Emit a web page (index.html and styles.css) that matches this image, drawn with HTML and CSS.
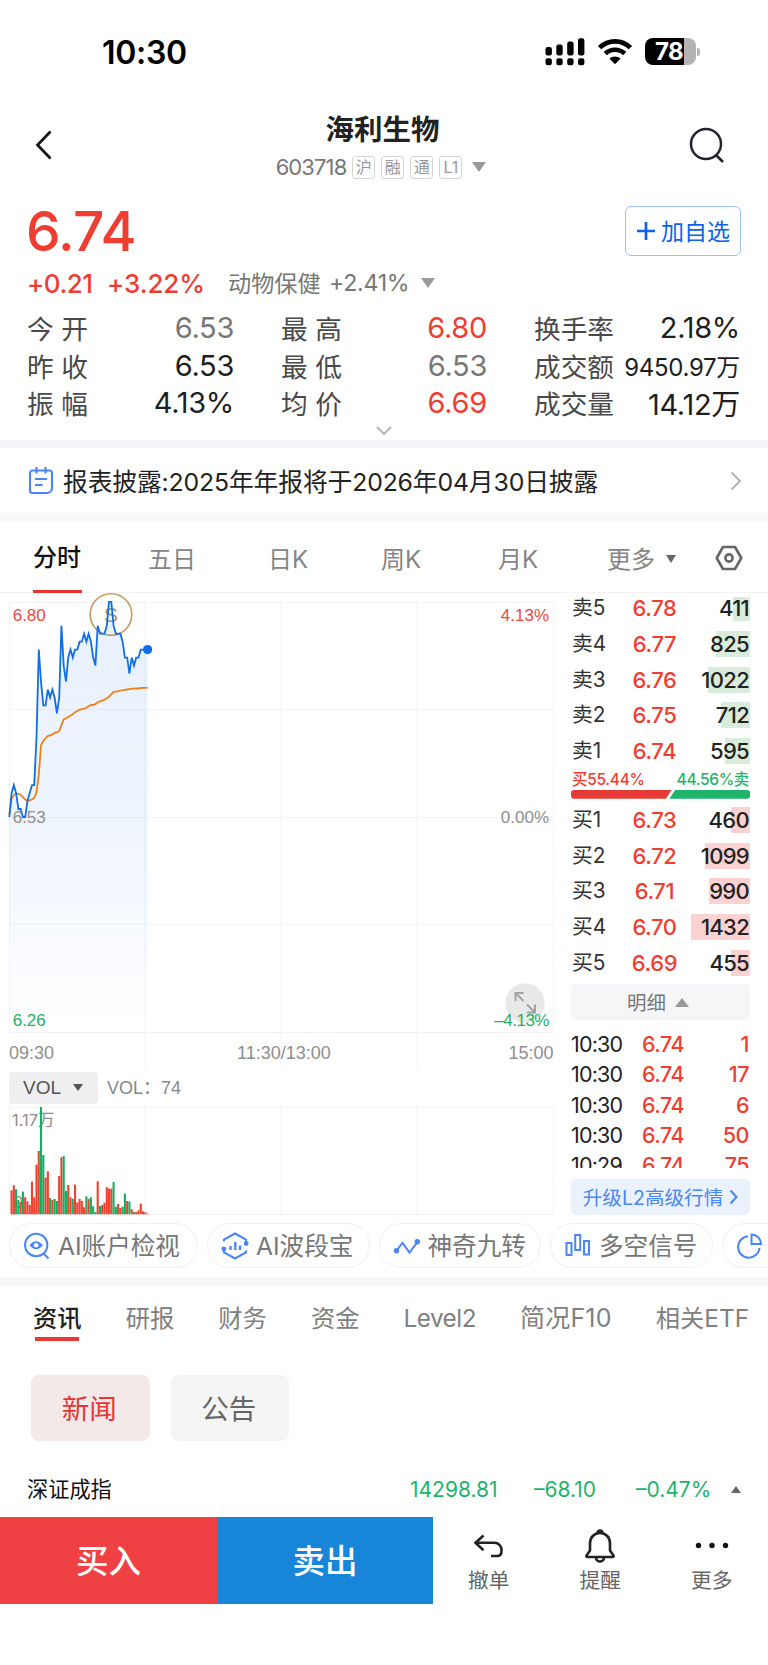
FILE: index.html
```html
<!DOCTYPE html>
<html lang="zh-CN">
<head>
  <meta charset="UTF-8">
  <meta name="viewport" content="width=device-width, initial-scale=1.0">
  <title>海利生物 603718</title>
  <link rel="stylesheet" href="styles.css">
</head>
<body>

  <!-- 状态栏 -->
  <div class="status-bar">
    <span class="clock">10:30</span>
    <div class="status-icons">
      <svg width="40" height="28" viewBox="0 0 40 28">
        <rect x="0.5" y="9" width="6.4" height="8.5" rx="2.2"/>
        <rect x="11.3" y="6.5" width="6.4" height="11" rx="2.2"/>
        <rect x="22.2" y="3.5" width="6.4" height="14" rx="2.2"/>
        <rect x="33" y="0.3" width="6.4" height="17.2" rx="2.2"/>
        <rect x="0.5" y="20.3" width="6.4" height="7" rx="2.2"/>
        <rect x="11.3" y="20.3" width="6.4" height="7" rx="2.2"/>
        <rect x="22.2" y="20.3" width="6.4" height="7" rx="2.2"/>
        <rect x="33" y="20.3" width="6.4" height="7" rx="2.2"/>
      </svg>
      <svg class="wifi" width="36" height="28" viewBox="0 0 36 28">
        <path d="M2.6 9.6a22 22 0 0 1 30.8 0" fill="none" stroke="#000" stroke-width="4.8"/>
        <path d="M8.3 15.7a13.8 13.8 0 0 1 19.4 0" fill="none" stroke="#000" stroke-width="4.6"/>
        <path d="M18 26.3l-5.6-5.7a8.2 8.2 0 0 1 11.2 0z"/>
      </svg>
      <div class="battery">78</div>
      <span class="battery-tip"></span>
    </div>
  </div>

  <!-- 标题 -->
  <header class="header">
    <svg class="back" width="20" height="32" viewBox="0 0 20 32"><path d="M16.5 2.5L3.5 16l13 13.5" fill="none" stroke="#111" stroke-width="2.7"/></svg>
    <div class="title-box">
      <h1>海利生物</h1>
      <div class="code-line">
        <span class="code">603718</span>
        <span class="tag">沪</span>
        <span class="tag">融</span>
        <span class="tag">通</span>
        <span class="tag">L1</span>
        <i class="tri-down"></i>
      </div>
    </div>
    <svg class="search" width="38" height="38" viewBox="0 0 38 38"><circle cx="18" cy="18" r="15" fill="none" stroke="#23232b" stroke-width="2.5"/><path d="M28 29l7 7" stroke="#23232b" stroke-width="2.7"/></svg>
  </header>

  <!-- 报价 -->
  <section class="quote">
    <div class="quote-top">
      <span class="price">6.74</span>
      <button class="add-button">
        <svg width="20" height="20" viewBox="0 0 20 20"><path d="M10 1v18M1 10h18" stroke="#0a63f0" stroke-width="2.7"/></svg><span>加自选</span>
      </button>
    </div>
    <div class="change-line">
      <span class="change">+0.21</span>
      <span class="change percent">+3.22%</span>
      <span class="sector">动物保健</span>
      <span class="sector-change">+2.41%</span>
      <i class="tri-down"></i>
    </div>
    <div class="stats">
      <div class="stat"><span>今 开</span><b class="gray">6.53</b></div>
      <div class="stat"><span>最 高</span><b class="red">6.80</b></div>
      <div class="stat"><span>换手率</span><b>2.18%</b></div>
      <div class="stat"><span>昨 收</span><b>6.53</b></div>
      <div class="stat"><span>最 低</span><b class="gray">6.53</b></div>
      <div class="stat"><span>成交额</span><b class="small">9450.97万</b></div>
      <div class="stat"><span>振 幅</span><b>4.13%</b></div>
      <div class="stat"><span>均 价</span><b class="red">6.69</b></div>
      <div class="stat"><span>成交量</span><b>14.12万</b></div>
    </div>
    <svg class="expand-stats" width="18" height="12" viewBox="0 0 18 12"><path d="M2 2l7 7 7-7" fill="none" stroke="#b5b5b5" stroke-width="2"/></svg>
  </section>

  <!-- 公告提示 -->
  <section class="notice">
    <svg width="26" height="30" viewBox="0 0 26 30" fill="none" stroke="#4a86f7" stroke-width="2.2">
      <path d="M4.5 4.5h17a2.5 2.5 0 0 1 2.5 2.5v15a5 5 0 0 1-5 5H4.5a2.5 2.5 0 0 1-2.5-2.5V7a2.5 2.5 0 0 1 2.5-2.5z"/>
      <path d="M8.5 1v6.5M17.5 1v6.5M7 13h12M7 19h7.5"/>
    </svg>
    <p>报表披露:2025年年报将于2026年04月30日披露</p>
    <svg class="arrow" width="12" height="20" viewBox="0 0 12 20"><path d="M1.5 1.5l8.5 8.5-8.5 8.5" fill="none" stroke="#b4b4b4" stroke-width="2"/></svg>
  </section>

  <!-- 周期切换 -->
  <nav class="period-tabs">
    <span class="active">分时</span>
    <span>五日</span>
    <span>日K</span>
    <span>周K</span>
    <span>月K</span>
    <span>更多<i class="tri-down mini"></i></span>
    <svg width="28" height="26" viewBox="0 0 28 26" fill="none" stroke="#666" stroke-width="2.6"><path d="M8 2h12l6.3 11L20 24H8L1.7 13z" stroke-linejoin="round"/><circle cx="14" cy="13" r="3.6"/></svg>
  </nav>

  <div class="market">
    <!-- 分时图 -->
    <div class="charts">
      <svg class="price-chart" width="560" height="474" viewBox="0 593 560 474">
        <defs>
          <linearGradient id="fill" x1="0" y1="602" x2="0" y2="1032" gradientUnits="userSpaceOnUse">
            <stop offset="0" stop-color="#1a6ff0" stop-opacity="0.1"/>
            <stop offset="0.5" stop-color="#1a6ff0" stop-opacity="0.07"/>
            <stop offset="1" stop-color="#1a6ff0" stop-opacity="0"/>
          </linearGradient>
        </defs>
        <path class="grid" d="M9 602.5H553.5M9 709.5H553.5M9 817.5H553.5M9 924.5H553.5M9 1032.5H553.5M9.5 602V1032M553.5 602V1032M145 602V1067M281 602V1067M417 602V1067"/>
        <circle cx="111" cy="614.5" r="20.8" fill="none" stroke="#c09a5c" stroke-width="1.6"/>
        <text class="mark" x="111" y="622" text-anchor="middle">S</text>
        <polygon id="area" fill="url(#fill)"/>
        <polyline id="avgLine" class="avg-line"/>
        <polyline id="priceLine" class="price-line"/>
        <circle id="lastDot" r="4.6" fill="#0f6ee8"/>
        <circle cx="525" cy="1003" r="19.7" fill="#e9e9e9"/>
        <path d="M515.5 1001v-8h8M516 993.5l7.5 7.5M535 1004.5v8h-8M534.500 1012l-7.500-7.500" fill="none" stroke="#a2a2a2" stroke-width="2"/>
        <text x="12.7" y="620.5" class="up">6.80</text>
        <text x="12.7" y="823">6.53</text>
        <text x="12.7" y="1026" class="down">6.26</text>
        <text x="549" y="620.5" class="up" text-anchor="end">4.13%</text>
        <text x="549" y="823" text-anchor="end">0.00%</text>
        <text x="549" y="1026" class="down minus" text-anchor="end">–4.13%</text>
        <text x="9" y="1058.7" class="time">09:30</text>
        <text x="284" y="1058.7" class="time" text-anchor="middle">11:30/13:00</text>
        <text x="553.5" y="1058.7" class="time" text-anchor="end">15:00</text>
      </svg>
      <div class="vol-line">
        <span class="vol-button">VOL<i class="tri-down"></i></span>
        <span class="vol-value">VOL：74</span>
      </div>
      <svg class="vol-chart" width="560" height="112" viewBox="0 1105 560 112">
        <path class="grid" d="M9 1107.5H553.5M9 1214.5H553.5M9.5 1107V1214M553.5 1107V1214M145 1105V1214M281 1105V1214M417 1105V1214"/>
        <text x="12" y="1126" class="vol-max">1.17万</text>
        <text x="13" y="1208" class="vol-max">0</text>
        <g id="volBars"></g>
      </svg>
    </div>

    <!-- 五档盘口 -->
    <aside class="book">
      <div class="levels sell" id="sellLevels"></div>
      <div class="ratio">
        <div class="ratio-text"><span class="red">买55.44%</span><span class="green">44.56%卖</span></div>
        <svg width="179" height="9" viewBox="0 0 179 9"><path d="M3 0h97.5l-5.5 8.7H3a3 3 0 0 1-3-3V3a3 3 0 0 1 3-3z" fill="#e63a36"/><path d="M104 0h72a3 3 0 0 1 3 3v2.7a3 3 0 0 1-3 3H98.5z" fill="#1fb36b"/></svg>
      </div>
      <div class="levels buy" id="buyLevels"></div>
      <div class="detail-button"><span>明细</span><i class="tri-up"></i></div>
      <div class="ticks">
        <div class="tick"><span>10:30</span><b>6.74</b><b>1</b></div>
        <div class="tick"><span>10:30</span><b>6.74</b><b>17</b></div>
        <div class="tick"><span>10:30</span><b>6.74</b><b>6</b></div>
        <div class="tick"><span>10:30</span><b>6.74</b><b>50</b></div>
        <div class="tick"><span>10:29</span><b>6.74</b><b>75</b></div>
      </div>
      <div class="l2-button"><span>升级L2高级行情</span><svg width="9" height="16" viewBox="0 0 9 16"><path d="M1.5 1.5L7.5 8l-6 6.5" fill="none" stroke="#4a86f5" stroke-width="2"/></svg></div>
    </aside>
  </div>

  <!-- 工具 -->
  <div class="tools">
    <div class="tool">
      <svg width="28" height="28" viewBox="0 0 28 28"><circle cx="13.2" cy="13" r="11.2"/><path d="M20.5 21.5l5 5"/><path d="M6.5 13.2q6.7-8 13.4 0q-6.7 8-13.4 0z" fill="#4a86f5" stroke="none"/><circle cx="13.2" cy="13.2" r="2.3" fill="#fff" stroke="none"/></svg>
      <span>AI账户检视</span>
    </div>
    <div class="tool">
      <svg width="28" height="28" viewBox="0 0 28 28"><path d="M3 9.5V7.5L14 1.5l11 6V11M25 18.5v2L14 26.5l-11-6V18"/><circle cx="25.2" cy="11.5" r="1.4" fill="#4a86f5"/><circle cx="2.8" cy="17" r="1.4" fill="#4a86f5"/><path d="M9.5 14v4M14.3 10v8M19 13.5V18" stroke-width="2.4"/></svg>
      <span>AI波段宝</span>
    </div>
    <div class="tool">
      <svg width="28" height="28" viewBox="0 0 28 28"><path d="M3.5 18.5l6-7.5 7 9.5L24 10.5"/><circle cx="3.5" cy="18.8" r="1.7" fill="#4a86f5"/><circle cx="24.3" cy="9.8" r="1.7" fill="#4a86f5"/></svg>
      <span>神奇九转</span>
    </div>
    <div class="tool">
      <svg width="28" height="28" viewBox="0 0 28 28"><rect x="2.5" y="11" width="5" height="12"/><rect x="11.2" y="3" width="5" height="15"/><rect x="20" y="9" width="5" height="13.5"/></svg>
      <span>多空信号</span>
    </div>
    <div class="tool more">
      <svg width="28" height="28" viewBox="0 0 28 28"><path d="M12 4.3A10.7 10.7 0 1 0 23.5 16M15.5 2.5V12H25a9.6 9.6 0 0 0-9.5-9.5z"/></svg>
    </div>
  </div>

  <!-- 资讯 -->
  <nav class="info-tabs">
    <span class="active">资讯</span>
    <span>研报</span>
    <span>财务</span>
    <span>资金</span>
    <span class="level2">Level2</span>
    <span class="f10">简况F10</span>
    <span>相关ETF</span>
  </nav>
  <div class="news-switch">
    <button class="on">新闻</button>
    <button>公告</button>
  </div>

  <!-- 指数 -->
  <div class="index-line">
    <span class="index-name">深证成指</span>
    <span class="index-value">14298.81</span>
    <span class="index-diff">–68.10</span>
    <span class="index-percent">–0.47%</span>
    <i class="tri-up"></i>
  </div>

  <!-- 底部操作 -->
  <footer class="trade-bar">
    <button class="buy-button">买入</button>
    <button class="sell-button">卖出</button>
    <div class="action">
      <svg width="34" height="34" viewBox="0 0 34 34"><path d="M11.500 6.500L3.500 13.800l8 7.500M3.500 13.800H22.500a7 7 0 0 1 7 7v1.500q0 4.700-4.500 4.700H19"/></svg>
      <span>撤单</span>
    </div>
    <div class="action">
      <svg width="34" height="34" viewBox="0 0 34 34"><path d="M17 4c-6 0-10 4.500-10 10.500v7L3.500 26.500q-.6 1.500 1 1.500h25q1.600 0 1-1.500L27 21.500v-7C27 8.500 23 4 17 4z"/><path d="M14.500 4a2.500 2.500 0 0 1 5 0M13 28.500a4 4 0 0 0 8 0"/></svg>
      <span>提醒</span>
    </div>
    <div class="action">
      <svg width="34" height="34" viewBox="0 0 34 34"><g fill="#111" stroke="none"><circle cx="3.5" cy="16.5" r="2.7"/><circle cx="17" cy="16.5" r="2.7"/><circle cx="30.5" cy="16.5" r="2.7"/></g></svg>
      <span>更多</span>
    </div>
  </footer>

  <script>
    const PREV_CLOSE = 6.53;
    const LEFT = 9.3;
    const STEP = 544 / 240;      // 每分钟宽度
    const MID = 817;
    const CENT = 7.97;           // 一分钱的高度

    const prices = [
      6.53, 6.56, 6.57, 6.56, 6.54, 6.54, 6.53, 6.53, 6.55, 6.56, 6.57, 6.57, 6.63, 6.74, 6.70, 6.67,
      6.67, 6.69, 6.68, 6.69, 6.68, 6.66, 6.68, 6.77, 6.72, 6.70, 6.73, 6.74, 6.73, 6.74, 6.74, 6.75,
      6.75, 6.76, 6.75, 6.76, 6.75, 6.73, 6.72, 6.77, 6.76, 6.76, 6.76, 6.77, 6.80, 6.80, 6.77, 6.76,
      6.76, 6.76, 6.75, 6.73, 6.73, 6.71, 6.73, 6.72, 6.73, 6.73, 6.74, 6.74, 6.74, 6.74
    ];
    const averages = [
      6.533, 6.553, 6.5575, 6.5595, 6.559, 6.558, 6.555, 6.552, 6.5505, 6.551, 6.552, 6.554, 6.561, 6.583,
      6.62, 6.6255, 6.629, 6.6315, 6.6325, 6.6335, 6.6355, 6.636, 6.638, 6.645, 6.6525, 6.654, 6.6555, 6.6575,
      6.659, 6.6615, 6.663, 6.6645, 6.6655, 6.666, 6.667, 6.669, 6.6705, 6.6705, 6.6715, 6.674, 6.675, 6.676,
      6.677, 6.679, 6.681, 6.684, 6.687, 6.6873, 6.688, 6.6885, 6.689, 6.6895, 6.69, 6.6905, 6.691, 6.691,
      6.6912, 6.6912, 6.6918, 6.692, 6.692, 6.692
    ];
    // 成交量：正数为涨，负数为跌
    const volumes = [
      72, 87, -75, -43, 37, -68, 51, 39, 28, 98, 51, 149, 190, -322, -178, 110, 129, -49, 43, -46, -40,
      115, 171, -175, -70, 88, 51, -47, 89, 36, 46, 40, 21, -54, 46, -51, -24, -7, 99, -25, 28, 35, 81,
      77, 77, -97, -23, 31, 19, -23, -62, 40, -38, 15, -7, 7, 12, 32, 9, 6, 2
    ];

    const toX = i => (LEFT + i * STEP).toFixed(1);
    const toY = p => (MID - (p - PREV_CLOSE) * 100 * CENT).toFixed(1);
    const toPoints = list => list.map((p, i) => `${toX(i)},${toY(p)}`).join(' ');

    const last = prices.length - 1;
    document.getElementById('priceLine').setAttribute('points', toPoints(prices));
    document.getElementById('avgLine').setAttribute('points', toPoints(averages));
    document.getElementById('area').setAttribute('points', `${LEFT},1032 ${toPoints(prices)} ${toX(last)},1032`);
    document.getElementById('lastDot').setAttribute('cx', toX(last));
    document.getElementById('lastDot').setAttribute('cy', toY(prices[last]));

    document.getElementById('volBars').innerHTML = volumes.map((v, i) => {
      const h = Math.abs(v) / 3;
      return `<rect x="${LEFT + (i + 1) * STEP - 1.05}" y="${1214.3 - h}" width="2.1" height="${h}" fill="${v > 0 ? '#f0402f' : '#12b060'}"/>`;
    }).join('');

    // 盘口
    function renderLevels(id, rows) {
      document.getElementById(id).innerHTML = rows.map(([name, price, amount]) => `
        <div class="level">
          <span>${name}</span>
          <b class="level-price">${price}</b>
          <b class="amount"><i style="width:${Math.round(amount * 0.0413)}px"></i>${amount}</b>
        </div>`).join('');
    }
    renderLevels('sellLevels', [
      ['卖5', '6.78', 411], ['卖4', '6.77', 825], ['卖3', '6.76', 1022], ['卖2', '6.75', 712], ['卖1', '6.74', 595]
    ]);
    renderLevels('buyLevels', [
      ['买1', '6.73', 460], ['买2', '6.72', 1099], ['买3', '6.71', 990], ['买4', '6.70', 1432], ['买5', '6.69', 455]
    ]);
  </script>
</body>
</html>
```

FILE: styles.css
```css
* {
  box-sizing: border-box;
}

body {
  margin: 0;
  width: 768px;
  height: 1665px;
  overflow: hidden;
  background-color: #fff;
  color: #222;
  font-family: Inter, "Noto Sans CJK SC", sans-serif;
}

h1, p {
  margin: 0;
}

b, i {
  font-weight: normal;
  font-style: normal;
}

button {
  border: none;
  padding: 0;
  font-family: inherit;
}

svg {
  display: block;
  flex: none;
  overflow: visible;
}

.red {
  color: #f03d32;
}

.green {
  color: #1fb36b;
}

/* 三角 */
.tri-down, .tri-up {
  display: inline-block;
  border: 7px solid transparent;
  border-bottom-width: 0;
  border-top: 10px solid #999;
}

.tri-up {
  border-top-width: 0;
  border-bottom: 9px solid #999;
}

.tri-down.mini {
  border-width: 8px 5px 0;
  border-top-color: #666;
}

/* 状态栏 */
.status-bar {
  display: flex;
  justify-content: space-between;
  height: 105px;
  padding: 38px 68px 0 102px;
}

.clock {
  height: 28px;
  line-height: 30px;
  font-size: 32px;
  font-weight: 600;
  letter-spacing: -0.3px;
  color: #000;
}

.status-icons {
  display: flex;
  height: 28px;
}

.wifi {
  margin: 0 12px;
}

.battery {
  width: 51px;
  height: 27px;
  padding-left: 10px;
  border-radius: 8px;
  background: linear-gradient(to right, #000 39px, #b4b4b4 39px);
  line-height: 28px;
  font-size: 24px;
  font-weight: 700;
  letter-spacing: -0.5px;
  color: #fff;
}

.battery-tip {
  width: 3px;
  height: 8px;
  margin: 10px 0 0 1px;
  border-radius: 0 3px 3px 0;
  background-color: #b4b4b4;
}

/* 标题 */
.header {
  display: flex;
  justify-content: space-between;
  height: 93px;
  padding: 0 42px 0 34px;
}

.back {
  margin-top: 24px;
}

.search {
  margin-top: 21px;
}

.title-box {
  margin-left: 20px;
}

.title-box h1 {
  height: 48px;
  padding-left: 3px;
  line-height: 49px;
  text-align: center;
  font-size: 28.5px;
  font-weight: 600;
}

.code-line {
  display: flex;
  align-items: center;
  gap: 6px;
  height: 28px;
}

.code {
  font-size: 22px;
  letter-spacing: -0.9px;
  color: #777;
}

.tag {
  width: 23px;
  height: 23px;
  border: 1px solid #d5d5d5;
  border-radius: 3px;
  text-align: center;
  line-height: 20px;
  font-size: 16px;
  color: #999;
}

.code-line .tri-down {
  margin-left: 4px;
}

/* 报价 */
.quote {
  height: 242px;
  padding: 0 28px 0 27px;
}

.quote-top {
  display: flex;
  justify-content: space-between;
  height: 66px;
  padding-top: 8px;
}

.price {
  line-height: 50px;
  font-size: 55px;
  font-weight: 500;
  letter-spacing: -0.8px;
  margin-left: -1px;
  color: #f03d32;
}

.add-button {
  display: flex;
  align-items: center;
  justify-content: center;
  gap: 5px;
  width: 116px;
  height: 50px;
  margin-right: -1px;
  border: 1px solid #9dc0fb;
  border-radius: 6px;
  background-color: #fff;
  font-size: 23px;
  color: #0a63f0;
}

.add-button span {
  margin-top: -3px;
}

.change-line {
  display: flex;
  align-items: center;
  height: 38px;
}

.change {
  width: 80px;
  font-size: 26px;
  font-weight: 500;
  letter-spacing: -0.5px;
  color: #f03d32;
}

.change.percent {
  width: 121px;
  letter-spacing: -0.1px;
}

.sector, .sector-change {
  width: 101px;
  font-size: 23.2px;
  color: #777;
}

.sector {
  margin-top: -2px;
}

.sector-change {
  width: 92px;
  letter-spacing: -0.3px;
}

.stats {
  display: grid;
  grid-template-columns: 207px 206px 206px;
  column-gap: 47px;
  padding-top: 7px;
}

.stat {
  display: flex;
  justify-content: space-between;
  align-items: center;
  height: 37.4px;
  font-size: 26.7px;
  color: #4a4a4a;
  white-space: nowrap;
}

.stat b {
  font-size: 29px;
  letter-spacing: -0.3px;
  color: #1e1e1e;
}

.stat b.gray {
  color: #777;
}

.stat b.red {
  color: #f03d32;
}

.stat b.small {
  font-size: 24px;
}

.expand-stats {
  margin: 4px auto 0;
}

/* 公告提示 */
.notice {
  display: flex;
  align-items: center;
  height: 82px;
  padding: 0 26px 0 28px;
  border-top: 8px solid #f5f5f9;
  border-bottom: 9px solid #f8f8f8;
}

.notice p {
  flex: 1;
  margin: -2px 0 0 9px;
  font-size: 24.8px;
  letter-spacing: -0.15px;
  white-space: nowrap;
}

/* 周期切换 */
.period-tabs {
  display: grid;
  grid-template-columns: 115px 120px 113px 117px 109px 108px auto;
  align-items: center;
  height: 71px;
  padding-left: 33px;
  border-bottom: 1px solid #f3f3f3;
  font-size: 24px;
  color: #858585;
}

.period-tabs .active {
  width: 49px;
  height: 71px;
  line-height: 71px;
  font-weight: 500;
  color: #111;
  border-bottom: 3px solid #ea3330;
}

.period-tabs .mini {
  margin-left: 11px;
  vertical-align: 5px;
}

/* 图表 */
.market {
  display: flex;
  height: 626px;
}

.charts {
  width: 571px;
}

.charts text {
  font-family: "Liberation Sans", "Noto Sans CJK SC", sans-serif;
  font-size: 17px;
  fill: #8e8e8e;
}

.charts .up {
  fill: #f0483d;
}

.charts .down {
  fill: #1fae68;
}

.charts .minus {
  letter-spacing: -0.5px;
}

.charts .time {
  font-size: 18px;
}

.charts .mark {
  font-size: 21px;
  fill: #b9935a;
}

.charts .vol-max {
  font-family: Inter, "Noto Sans CJK SC", sans-serif;
  font-size: 16.5px;
}

.grid {
  fill: none;
  stroke: #f3f3f4;
  stroke-width: 1;
}

.price-line, .avg-line {
  fill: none;
  stroke: #0f6ee8;
  stroke-width: 1.8;
}

.avg-line {
  stroke: #f08018;
}

.vol-line {
  display: flex;
  align-items: center;
  height: 38px;
  padding-left: 9px;
  font-family: "Liberation Sans", "Noto Sans CJK SC", sans-serif;
}

.vol-button {
  display: flex;
  align-items: center;
  width: 89px;
  height: 32px;
  margin: 3px 9px 0 0;
  padding-left: 14px;
  border-radius: 4px;
  background-color: #efeff2;
  font-size: 19px;
  color: #555;
}

.vol-button .tri-down {
  margin-left: 12px;
  border-width: 7px 5px 0;
  border-top-color: #555;
}

.vol-value {
  font-size: 18px;
  color: #888;
}

/* 盘口 */
.book {
  width: 179px;
  padding-top: 4px;
}

.levels {
  display: flex;
  flex-direction: column;
  height: 172px;
  overflow: hidden;
}

.sell {
  justify-content: flex-end;
}

.level {
  display: grid;
  grid-template-columns: 50px 65px 1fr;
  align-items: center;
  flex: none;
  height: 35.7px;
  padding-left: 1px;
  line-height: 26px;
  font-size: 20.8px;
  color: #333;
}

.level-price {
  text-align: center;
  font-size: 22px;
  letter-spacing: -0.4px;
  font-weight: 500;
  color: #f03d32;
}

.amount {
  position: relative;
  padding-right: 1px;
  text-align: right;
  font-size: 22px;
  font-weight: 500;
  letter-spacing: -0.7px;
  color: #222;
}

.amount i {
  position: absolute;
  top: 0;
  right: 0;
  height: 26px;
  z-index: -1;
  background-color: #fad2d2;
}

.sell .amount i {
  background-color: #d9ecdb;
}

.ratio {
  height: 33px;
}

.ratio-text {
  display: flex;
  justify-content: space-between;
  height: 21px;
  padding: 0 1px;
  line-height: 22px;
  font-size: 15.5px;
  font-weight: 500;
  letter-spacing: -0.3px;
}

.buy {
  height: 180px;
}

.detail-button {
  display: flex;
  align-items: center;
  justify-content: center;
  gap: 9px;
  height: 36px;
  margin-top: 2px;
  padding-right: 5px;
  border-radius: 5px;
  background-color: #f6f6f9;
  font-size: 19.5px;
  color: #777;
}

.detail-button span, .l2-button span {
  margin-top: -2px;
}

.ticks {
  height: 148px;
  padding-top: 9px;
  overflow: hidden;
}

.tick {
  display: grid;
  grid-template-columns: 71px 50px 1fr;
  height: 30.3px;
  padding-right: 1px;
  line-height: 30.3px;
  font-size: 21.5px;
  letter-spacing: -0.8px;
}

.tick b {
  font-weight: 500;
  letter-spacing: -0.5px;
  color: #f03d32;
}

.tick b:last-child {
  text-align: right;
}

.l2-button {
  display: flex;
  align-items: center;
  justify-content: center;
  gap: 6px;
  height: 36px;
  margin-top: 11px;
  border-radius: 5px;
  background-color: #e9f2fe;
  font-size: 19.6px;
  color: #4a86f5;
}

/* 工具 */
.tools {
  display: flex;
  gap: 9px;
  height: 67px;
  padding: 4px 0 0 9px;
  border-bottom: 9px solid #f7f7f7;
  overflow: hidden;
}

.tool {
  display: flex;
  align-items: center;
  flex: none;
  gap: 7px;
  width: 162.5px;
  height: 45px;
  padding-left: 13px;
  border: 1.5px solid #f0f0f0;
  border-radius: 23px;
  font-size: 24.6px;
  color: #777;
  white-space: nowrap;
}

.tool:first-child {
  width: 189px;
}

.tool span {
  margin-top: -3px;
}

.tool svg {
  fill: none;
  stroke: #4a86f5;
  stroke-width: 2;
}

/* 资讯 */
.info-tabs {
  display: flex;
  justify-content: space-between;
  height: 55px;
  padding: 0 19px 0 33px;
  line-height: 64px;
  font-size: 24.3px;
  color: #808080;
}

.info-tabs .active {
  color: #222;
  font-weight: 500;
  background: linear-gradient(#e63a36, #e63a36) center bottom / 44px 4px no-repeat;
}

.info-tabs .level2 {
  letter-spacing: -0.5px;
}

.info-tabs .f10 {
  font-size: 25px;
  letter-spacing: 0.2px;
}

.news-switch {
  display: flex;
  gap: 21px;
  padding: 34px 31px 0;
}

.news-switch button {
  width: 118.5px;
  height: 66px;
  padding: 0 2px 2px 0;
  border-radius: 8px;
  background-color: #f5f5f5;
  font-size: 27.5px;
  color: #666;
}

.news-switch .on {
  background-color: #f4e9e9;
  color: #ea3532;
}

/* 指数 */
.index-line {
  display: flex;
  align-items: center;
  height: 50px;
  margin-top: 23px;
  padding: 0 27px;
  font-size: 21px;
  color: #1fb36b;
}

.index-name {
  width: 383px;
  margin-top: -3px;
  font-size: 21.2px;
  color: #111;
}

.index-value {
  width: 124px;
}

.index-diff {
  width: 102px;
}

.index-percent {
  flex: 1;
}

.index-line .tri-up {
  border-width: 0 5px 7px;
  border-bottom-color: #666;
}

/* 底部操作 */
.trade-bar {
  display: flex;
  height: 87px;
  margin-top: 3px;
}

.buy-button, .sell-button {
  width: 217px;
  padding-bottom: 4px;
  background-color: #ef4143;
  font-size: 32.5px;
  font-weight: 500;
  color: #fff;
}

.sell-button {
  width: 216px;
  background-color: #1786d8;
}

.action {
  display: flex;
  flex-direction: column;
  align-items: center;
  width: 111.5px;
  padding-top: 12px;
  font-size: 20.7px;
  color: #666;
}

.action span {
  line-height: 36px;
}

.action svg {
  fill: none;
  stroke: #222;
  stroke-width: 2.6;
}
```
